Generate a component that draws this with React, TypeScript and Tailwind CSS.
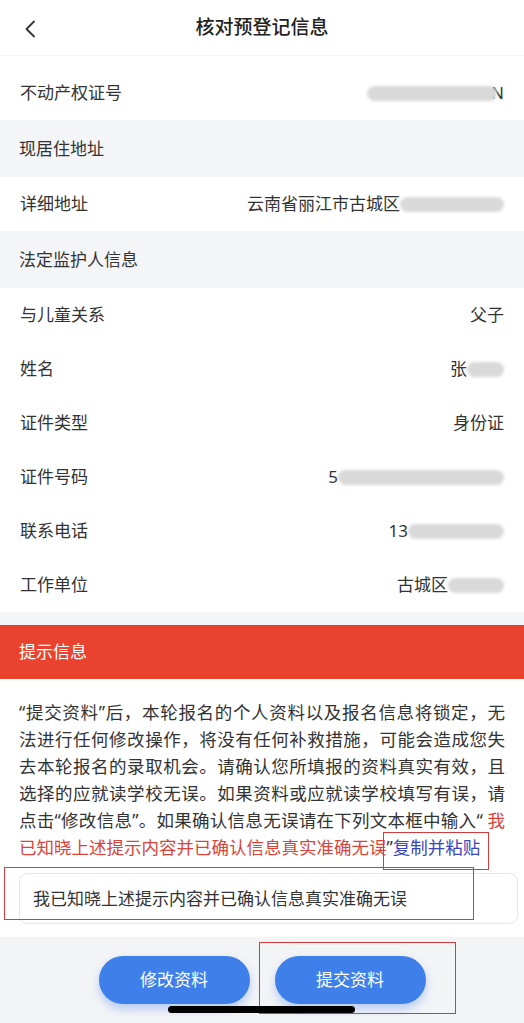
import React from "react";

const font = { fontFamily: '"Noto Sans", "Noto Sans CJK SC", sans-serif' };

function Blur({ w }: { w: string }) {
  return <span className={`inline-block h-[15px] rounded-full bg-[#d9d9d9] blur-[1.5px] align-middle ${w}`} />;
}

function Row({ label, children }: { label: string; children?: React.ReactNode }) {
  return (
    <div className="flex h-[54px] shrink-0 items-center justify-between bg-white pl-5 pr-5 text-[17px] text-[#333]">
      <span>{label}</span>
      <span className="flex items-center">{children}</span>
    </div>
  );
}

function Section({ label }: { label: string }) {
  return (
    <div className="flex h-[57px] shrink-0 items-center bg-[#f4f5f7] px-[19px] text-[17px] text-[#333]">{label}</div>
  );
}

export default function App() {
  return (
    <div style={font} className="relative flex h-[1023px] w-[524px] flex-col overflow-hidden bg-white">
      {/* Header */}
      <div className="relative flex h-[56px] shrink-0 items-center justify-center border-b border-[#f2f2f2]">
        <svg className="absolute left-[24px] top-[20px]" width="12" height="18" viewBox="0 0 12 18">
          <polyline points="10,1.5 2.5,9 10,16.5" fill="none" stroke="#333" strokeWidth="1.8" strokeLinecap="round" strokeLinejoin="round" />
        </svg>
        <span className="text-[19px] font-medium text-[#222]">核对预登记信息</span>
      </div>
      <div className="h-[10px] shrink-0" />
      <Row label="不动产权证号">
        <Blur w="w-[130px]" />
        <span className="-ml-[6px]">N</span>
      </Row>
      <Section label="现居住地址" />
      <Row label="详细地址">
        <span>云南省丽江市古城区</span>
        <Blur w="w-[104px]" />
      </Row>
      <Section label="法定监护人信息" />
      <Row label="与儿童关系">
        <span>父子</span>
      </Row>
      <Row label="姓名">
        <span>张</span>
        <Blur w="w-[37px]" />
      </Row>
      <Row label="证件类型">
        <span>身份证</span>
      </Row>
      <Row label="证件号码">
        <span>5</span>
        <Blur w="w-[166px]" />
      </Row>
      <Row label="联系电话">
        <span>13</span>
        <Blur w="w-[96px]" />
      </Row>
      <Row label="工作单位">
        <span>古城区</span>
        <Blur w="w-[56px]" />
      </Row>
      <div className="h-[13px] shrink-0 bg-[#f4f5f7]" />
      <div className="flex h-[54px] shrink-0 items-center bg-[#e9432f] px-[19px] text-[17px] text-white">提示信息</div>

      {/* Notice paragraph */}
      <div className="shrink-0 px-[19px] pt-5 text-[17.5px] leading-[27px] text-[#333]">
        <div className="whitespace-nowrap text-justify [text-align-last:justify]">“提交资料”后，本轮报名的个人资料以及报名信息将锁定，无</div>
        <div className="whitespace-nowrap text-justify [text-align-last:justify]">法进行任何修改操作，将没有任何补救措施，可能会造成您失</div>
        <div className="whitespace-nowrap text-justify [text-align-last:justify]">去本轮报名的录取机会。请确认您所填报的资料真实有效，且</div>
        <div className="whitespace-nowrap text-justify [text-align-last:justify]">选择的应就读学校无误。如果资料或应就读学校填写有误，请</div>
        <div className="whitespace-nowrap text-justify [text-align-last:justify]">
          点击“修改信息”。如果确认信息无误请在下列文本框中输入“ <span className="text-[#d8443a]">我</span>
        </div>
        <div className="whitespace-nowrap">
          <span className="text-[#d8443a]">已知晓上述提示内容并已确认信息真实准确无误</span>”<span className="text-[#3b45b8]">复制并粘贴</span>
        </div>
      </div>

      {/* Input */}
      <div className="ml-[19px] mr-[6px] mt-[12px] flex h-[51px] shrink-0 items-center rounded-lg border border-[#e6e6e6] pl-[13px] text-[17px] text-[#333]">
        我已知晓上述提示内容并已确认信息真实准确无误
      </div>

      {/* Bottom bar */}
      <div className="mt-[13px] flex flex-1 justify-center gap-[25px] bg-[#f3f4f6] pt-[19px]">
        <button className="h-[48px] w-[151px] rounded-full bg-[#3e7fe9] text-[17px] text-white shadow-[0_5px_10px_rgba(62,127,233,0.35)]">修改资料</button>
        <button className="h-[48px] w-[151px] rounded-full bg-[#3e7fe9] text-[17px] text-white shadow-[0_5px_10px_rgba(62,127,233,0.35)]">提交资料</button>
      </div>

      {/* Annotation boxes */}
      <div className="pointer-events-none absolute left-[383px] top-[832px] h-[38px] w-[106px] border-[1.5px] border-[#d63a3a]" />
      <div className="pointer-events-none absolute left-[4px] top-[867px] h-[53px] w-[470px] border-[1.5px] border-[#d63a3a]" />
      <div className="pointer-events-none absolute left-[259px] top-[942px] h-[72px] w-[197px] border-[1.5px] border-[#d63a3a]" />

      {/* Home indicator */}
      <div className="absolute left-[168px] top-[1006px] h-[7px] w-[187px] rounded-full bg-black" />
    </div>
  );
}
